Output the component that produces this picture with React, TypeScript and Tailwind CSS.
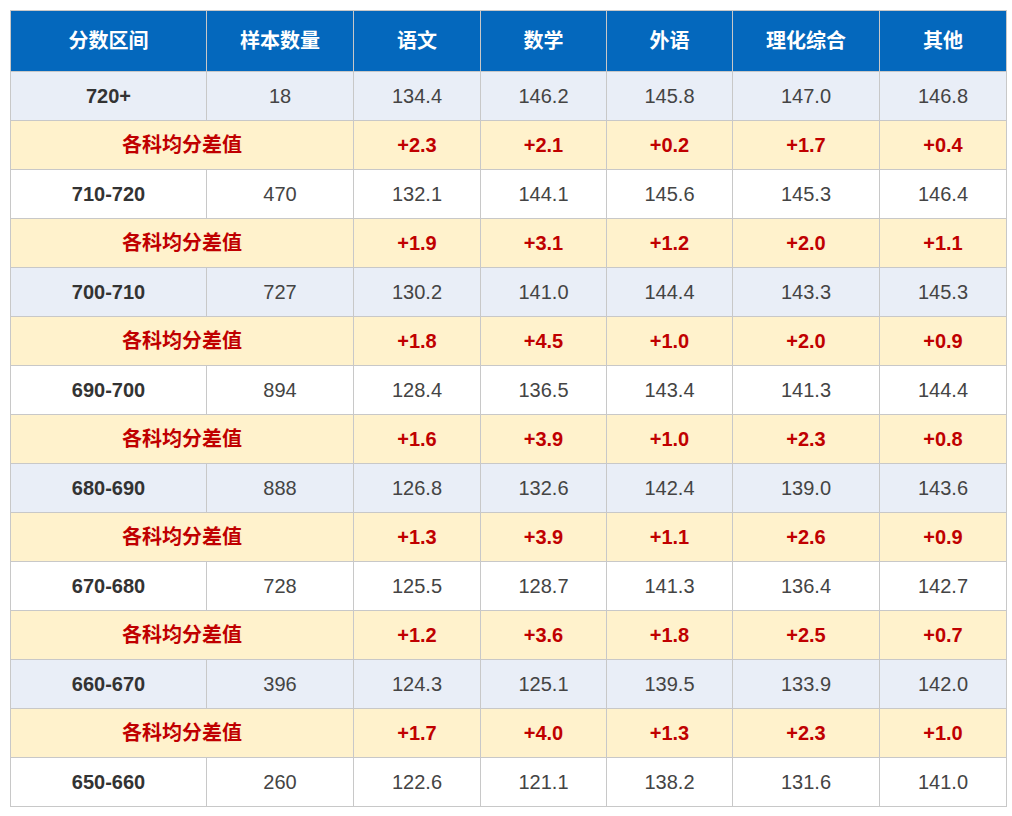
import React from "react";

type Row = { range: string; n: string; vals: string[]; diff?: string[]; blue: boolean };

const rows: Row[] = [
  { range: "720+", n: "18", vals: ["134.4", "146.2", "145.8", "147.0", "146.8"], diff: ["+2.3", "+2.1", "+0.2", "+1.7", "+0.4"], blue: true },
  { range: "710-720", n: "470", vals: ["132.1", "144.1", "145.6", "145.3", "146.4"], diff: ["+1.9", "+3.1", "+1.2", "+2.0", "+1.1"], blue: false },
  { range: "700-710", n: "727", vals: ["130.2", "141.0", "144.4", "143.3", "145.3"], diff: ["+1.8", "+4.5", "+1.0", "+2.0", "+0.9"], blue: true },
  { range: "690-700", n: "894", vals: ["128.4", "136.5", "143.4", "141.3", "144.4"], diff: ["+1.6", "+3.9", "+1.0", "+2.3", "+0.8"], blue: false },
  { range: "680-690", n: "888", vals: ["126.8", "132.6", "142.4", "139.0", "143.6"], diff: ["+1.3", "+3.9", "+1.1", "+2.6", "+0.9"], blue: true },
  { range: "670-680", n: "728", vals: ["125.5", "128.7", "141.3", "136.4", "142.7"], diff: ["+1.2", "+3.6", "+1.8", "+2.5", "+0.7"], blue: false },
  { range: "660-670", n: "396", vals: ["124.3", "125.1", "139.5", "133.9", "142.0"], diff: ["+1.7", "+4.0", "+1.3", "+2.3", "+1.0"], blue: true },
  { range: "650-660", n: "260", vals: ["122.6", "121.1", "138.2", "131.6", "141.0"], blue: false },
];

const headers = ["分数区间", "样本数量", "语文", "数学", "外语", "理化综合", "其他"];
const widths = ["w-[196px]", "w-[147px]", "w-[127px]", "w-[126px]", "w-[126px]", "w-[147px]", "w-[127px]"];

export default function App() {
  return (
    <div
      className="w-[1012px] h-[816px] bg-white pt-[10px] pl-[10px]"
      style={{ fontFamily: '"Liberation Sans", Arial, "Noto Sans CJK SC", sans-serif' }}
    >
      <table className="table-fixed border-collapse w-[997px] text-[20px]">
        <colgroup>
          {widths.map((w, i) => (
            <col key={i} className={w} />
          ))}
        </colgroup>
        <thead>
          <tr className="h-[61px]">
            {headers.map((h) => (
              <th key={h} className="border border-[#c8c8c8] bg-[#0468bd] text-white font-bold text-center p-0">
                {h}
              </th>
            ))}
          </tr>
        </thead>
        <tbody>
          {rows.map((r) => (
            <React.Fragment key={r.range}>
              <tr className={`h-[49px] ${r.blue ? "bg-[#e9eef7]" : "bg-white"}`}>
                <td className="border border-[#c8c8c8] text-center font-bold text-[#333333] p-0">{r.range}</td>
                <td className="border border-[#c8c8c8] text-center text-[#444444] p-0">{r.n}</td>
                {r.vals.map((v, i) => (
                  <td key={i} className="border border-[#c8c8c8] text-center text-[#444444] p-0">
                    {v}
                  </td>
                ))}
              </tr>
              {r.diff && (
                <tr className="h-[49px] bg-[#fff2cc]">
                  <td colSpan={2} className="border border-[#c8c8c8] text-center font-bold text-[#c00000] p-0">
                    各科均分差值
                  </td>
                  {r.diff.map((d, i) => (
                    <td key={i} className="border border-[#c8c8c8] text-center font-bold text-[#c00000] p-0">
                      {d}
                    </td>
                  ))}
                </tr>
              )}
            </React.Fragment>
          ))}
        </tbody>
      </table>
    </div>
  );
}
